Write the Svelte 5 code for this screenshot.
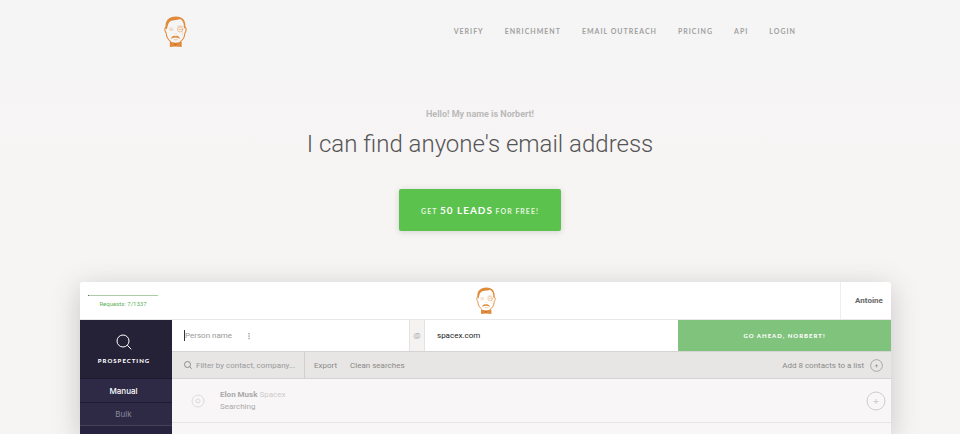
<script lang="ts">
  interface NavLink {
    label: string;
    href: string;
  }

  interface Contact {
    name: string;
    company: string;
    status: string;
  }

  const links: NavLink[] = [
    { label: 'Verify', href: '#verify' },
    { label: 'Enrichment', href: '#enrichment' },
    { label: 'Email Outreach', href: '#outreach' },
    { label: 'Pricing', href: '#pricing' },
    { label: 'API', href: '#api' },
    { label: 'Login', href: '#login' },
  ];

  const contacts: Contact[] = [{ name: 'Elon Musk', company: 'Spacex', status: 'Searching' }];

  let person = $state('');
  let domain = $state('spacex.com');
  let filter = $state('');
  let mode = $state('Manual');
</script>

{#snippet norbert()}
  <svg class="norbert" viewBox="0 0 44 60" fill="none" stroke="#e08a3c" stroke-linecap="round" stroke-linejoin="round" aria-hidden="true">
    <path d="M4 22C0 22 1 30 4 33C4 40 8 46 13 50M31 50C37 46 40 40 40 33C43 30 44 22 40 22" stroke-width="2" />
    <path d="M3 24C1 9 9 1 23 1C36 1 43 9 41 25L38 22C39 14 36 9 31 6C24 9 15 7 10 12C7 15 7 21 5 26Z" fill="#e08a3c" stroke="none" />
    <path d="M10 24Q13 21 17 24M26 20Q30 18 35 20" stroke-width="1" opacity="0.6" />
    <path d="M11 27Q14 25 17 27Q14 29 11 27" stroke-width="0.8" opacity="0.7" />
    <circle cx="31" cy="26" r="5" stroke-width="1.2" opacity="0.8" />
    <path d="M29 26H33" stroke-width="1" />
    <path d="M35 30L36 38M20 34Q22 36 25 34" stroke-width="0.8" opacity="0.5" />
    <path d="M13 44C15 39 19 37 22 39C25 37 29 39 31 44C28 44 25 41 22 42C19 41 16 44 13 44Z" fill="#e08a3c" stroke="none" />
    <path d="M20 46Q22 47 25 46" stroke-width="1" />
    <path d="M11 50L22 52L34 50V60L22 59L11 60Z" fill="#e08a3c" stroke="none" />
    <circle cx="22" cy="55" r="2.5" fill="#c9762c" stroke="none" />
  </svg>
{/snippet}

{#snippet magnifier()}
  <svg class="magnifier" viewBox="0 0 16 16" fill="none" stroke="currentColor" aria-hidden="true">
    <circle cx="7" cy="7" r="6" />
    <path d="M11.3 11.3L15.3 15.3" />
  </svg>
{/snippet}

{#snippet plus()}
  <svg class="plus" viewBox="0 0 20 20" fill="none" stroke="currentColor" aria-hidden="true">
    <circle cx="10" cy="10" r="9" />
    <path d="M10 8V13M7.5 10.5H12.5" />
  </svg>
{/snippet}

<div class="page">
  <header class="site-header">
    <a class="brand" href="#home" aria-label="Home">{@render norbert()}</a>
    <nav>
      {#each links as link}
        <a href={link.href}>{link.label}</a>
      {/each}
    </nav>
  </header>

  <section class="hero">
    <p>Hello! My name is Norbert!</p>
    <h1>I can find anyone's email address</h1>
    <button class="cta">Get <strong>50 leads</strong> for free!</button>
  </section>

  <main class="app">
    <div class="topbar">
      <div class="quota">
        <div class="meter"></div>
        <span>Requests: 7/1337</span>
      </div>
      <div class="app-logo">{@render norbert()}</div>
      <button class="account">Antoine</button>
    </div>

    <div class="workspace">
      <aside>
        <div class="section">
          {@render magnifier()}
          <span>Prospecting</span>
        </div>
        {#each ['Manual', 'Bulk'] as item}
          <button class="side-item" class:active={mode === item} onclick={() => (mode = item)}>
            {item}
          </button>
        {/each}
      </aside>

      <div class="results">
        <form class="search" onsubmit={(e) => e.preventDefault()}>
          <label class="person">
            <span class="caret"></span>
            <input bind:value={person} placeholder="Person name" aria-label="Person name" />
            <svg class="ibeam" viewBox="0 0 4 8" fill="none" stroke="#777" aria-hidden="true">
              <path d="M2 1V2.4M2 3.4V4.8M2 5.8V7.2" />
            </svg>
          </label>
          <span class="at">@</span>
          <input class="domain" bind:value={domain} aria-label="Company domain" />
          <button class="go">Go ahead, Norbert!</button>
        </form>

        <div class="tools">
          <label class="filter">
            {@render magnifier()}
            <input bind:value={filter} placeholder="Filter by contact, company..." aria-label="Filter" />
          </label>
          <button>Export</button>
          <button>Clean searches</button>
          <button class="add-list">Add 8 contacts to a list {@render plus()}</button>
        </div>

        {#each contacts as contact}
          <div class="contact">
            <svg class="avatar" viewBox="0 0 14 14" fill="none" stroke="currentColor" aria-hidden="true">
              <circle cx="7" cy="7" r="6" />
              <circle cx="7" cy="7" r="2" />
            </svg>
            <div class="details">
              <div><b>{contact.name}</b> <span>{contact.company}</span></div>
              <div>{contact.status}</div>
            </div>
            <button class="add" aria-label="Add {contact.name} to a list">{@render plus()}</button>
          </div>
        {/each}
      </div>
    </div>
  </main>
</div>

<style>
  :global(body) {
    background: #f7f4f4;
  }

  .page {
    display: flex;
    flex-direction: column;
    height: 100vh;
    overflow: hidden;
    background: linear-gradient(#f5f5f5, #f7f4f4 40%);
    font-family: Roboto, 'Liberation Sans', sans-serif;
    font-size: 8px;
    color: #777;
  }

  button,
  input {
    margin: 0;
    padding: 0;
    border: none;
    background: none;
    color: inherit;
    font: inherit;
  }

  button {
    cursor: pointer;
  }

  input {
    min-width: 0;
    outline: none;
  }

  svg {
    display: block;
    flex-shrink: 0;
  }

  .site-header {
    display: flex;
    flex-shrink: 0;
    align-items: center;
    justify-content: space-between;
    box-sizing: border-box;
    width: 100%;
    max-width: 632px;
    height: 62px;
    margin: 0 auto;
  }

  .brand .norbert {
    width: 23px;
    height: 31px;
  }

  nav {
    display: flex;
    gap: 21px;
  }

  nav a {
    color: #a0a0a0;
    font: 700 7px/12px Lato, sans-serif;
    letter-spacing: 1px;
    text-decoration: none;
    text-transform: uppercase;
  }

  .hero {
    display: flex;
    flex-shrink: 0;
    flex-direction: column;
    align-items: center;
    padding: 46px 0 51px;
    color: #bababa;
  }

  .hero p {
    margin: 0;
    font: 700 9px/12px Roboto, sans-serif;
  }

  .hero h1 {
    margin: 8px 0 29px;
    color: #555;
    font: 300 24px/32px Roboto, sans-serif;
  }

  .cta {
    height: 42px;
    padding: 0 22px;
    border-radius: 2px;
    background: #5bc24e;
    box-shadow: 0 1px 6px rgba(70, 70, 70, 0.2);
    color: #e2f5df;
    font: 700 7px/12px Lato, sans-serif;
    letter-spacing: 1px;
    text-transform: uppercase;
  }

  .cta strong {
    color: #fff;
    font-size: 10px;
    font-weight: 700;
  }

  .app {
    display: flex;
    flex: 1;
    flex-direction: column;
    min-height: 0;
    margin: 0 69px 0 80px;
    border-radius: 3px 3px 0 0;
    background: #f8f6f6;
    box-shadow: 0 6px 28px rgba(60, 60, 60, 0.26);
    overflow: hidden;
  }

  .topbar {
    display: grid;
    flex-shrink: 0;
    grid-template-columns: 1fr 20px 1fr;
    height: 37px;
    border-bottom: 1px solid #e8e6e6;
    background: #fff;
  }

  .quota {
    width: 70px;
    padding: 13px 8px 0;
    color: #5cb356;
    font-size: 6px;
    line-height: 10px;
    text-align: center;
  }

  .meter {
    height: 1px;
    margin-bottom: 3px;
    border-left: 1px solid #666;
    background: #aacda8;
  }

  .quota span {
    white-space: nowrap;
  }

  .app-logo {
    align-self: center;
  }

  .app-logo .norbert {
    width: 20px;
    height: 27px;
  }

  .account {
    justify-self: end;
    width: 51px;
    padding-left: 6px;
    border-left: 1px solid #efeded;
    color: #666;
    font-weight: 700;
  }

  .workspace {
    display: grid;
    flex: 1;
    grid-template-columns: 92px 1fr;
  }

  aside {
    display: flex;
    flex-direction: column;
    background: #282440;
    color: #fff;
  }

  .section {
    display: flex;
    flex-direction: column;
    align-items: center;
    gap: 6px;
    height: 44px;
    padding: 14px 4px 0 0;
    background: #252137;
    font: 900 6px/10px Lato, sans-serif;
    letter-spacing: 1px;
    text-transform: uppercase;
  }

  .section .magnifier {
    width: 16px;
    height: 16px;
  }

  .side-item {
    height: 24px;
    padding-right: 5px;
    border-top: 1px solid #1e1a31;
    background: #2e2a45;
    color: #8c899c;
    font-family: Inter, sans-serif;
  }

  .side-item.active {
    color: #fff;
    font-weight: 500;
  }

  .side-item:last-child {
    border-bottom: 1px solid #454157;
  }

  .search {
    display: grid;
    grid-template-columns: 237px 16px 1fr 213px;
    height: 31px;
    background: #fff;
  }

  .person {
    display: flex;
    align-items: center;
    padding-left: 12px;
  }

  .person input {
    width: 62px;
  }

  .person input::placeholder,
  .filter input::placeholder {
    color: #999;
    opacity: 1;
  }

  .caret {
    width: 1px;
    height: 11px;
    background: #333;
  }

  .ibeam {
    width: 4px;
    height: 8px;
  }

  .at {
    border: solid #e4e2e2;
    border-width: 0 1px;
    background: #f4f3f2;
    color: #aaa;
    line-height: 31px;
    text-align: center;
  }

  .domain {
    padding-left: 12px;
    color: #222;
  }

  .go {
    background: #80c37c;
    color: #fff;
    font: 900 6px/10px Lato, sans-serif;
    letter-spacing: 1px;
    text-transform: uppercase;
  }

  .tools {
    display: flex;
    align-items: center;
    gap: 13px;
    height: 26px;
    padding-right: 8px;
    border: solid #d5d3d3;
    border-width: 1px 0;
    background: #e7e6e5;
    color: #8b8a88;
  }

  .filter {
    display: flex;
    align-items: center;
    gap: 4px;
    box-sizing: border-box;
    width: 133px;
    height: 100%;
    margin-right: -4px;
    padding-left: 12px;
    border-right: 1px solid #d0cece;
  }

  .filter input {
    flex: 1;
  }

  .filter .magnifier {
    width: 8px;
    height: 8px;
    stroke-width: 2px;
  }

  .add-list {
    display: flex;
    align-items: center;
    gap: 6px;
    margin-left: auto;
  }

  .add-list .plus {
    width: 13px;
    height: 13px;
  }

  .contact {
    display: flex;
    align-items: center;
    height: 43px;
    padding: 0 5px 0 19px;
    border-bottom: 1px solid #e7e5e4;
    color: #aaa;
  }

  .avatar {
    width: 14px;
    height: 14px;
    color: #dddada;
  }

  .details {
    padding-left: 15px;
    line-height: 12px;
  }

  .details b {
    font-weight: 700;
  }

  .details span {
    color: #ccc;
  }

  .add {
    margin-left: auto;
    color: #cfcdcc;
  }

  .add .plus {
    width: 20px;
    height: 20px;
  }
</style>
